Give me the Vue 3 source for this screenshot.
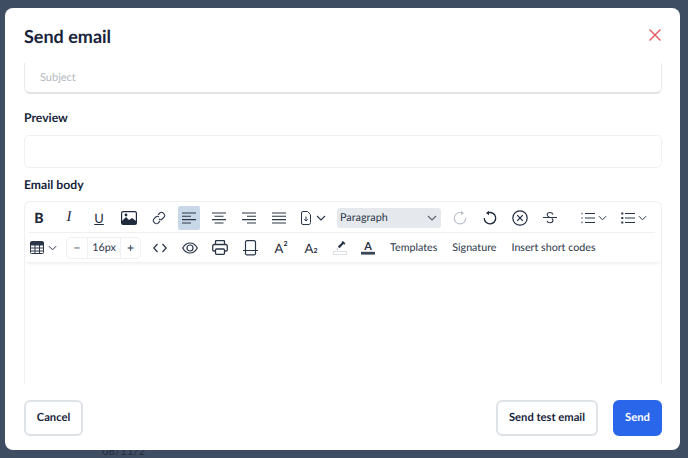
<script setup>
const row2Text = ['Templates', 'Signature', 'Insert short codes']
</script>

<template>
  <div class="page">
    <span class="behind">08/11/2</span>
    <div class="modal">
      <header class="head">
        <h1>Send email</h1>
        <svg class="close" width="12" height="12" viewBox="0 0 12 12"><path d="M.5.500l11 11M11.500.500l-11 11" stroke="#e5555c" stroke-width="1.400" fill="none"/></svg>
      </header>
      <div class="scroller">
        <div class="subject"><span>Subject</span></div>
        <div class="label l1">Preview</div>
        <div class="preview"></div>
        <div class="label l2">Email body</div>
        <div class="editor">
          <div class="toolbar">
            <div class="row r1">
              <span class="tb b1 txt bold">B</span>
              <span class="tb b2 txt ital">I</span>
              <span class="tb b3 txt und">U</span>
              <span class="tb b4"><svg width="16" height="14" viewBox="0 0 16 14"><rect x=".6" y=".6" width="14.8" height="12.8" rx="1.5" fill="#fff" stroke="#1f2a3c" stroke-width="1.2"/><path d="M1 13V10l4-4 3 3 3-2 4 3v3z" fill="#1f2a3c"/><circle cx="5" cy="4" r="1.4" fill="#1f2a3c"/></svg></span>
              <span class="tb b5"><svg width="14" height="14" viewBox="0 0 14 14" fill="none" stroke="#2b3648" stroke-width="1.1"><path d="M6 3.800l1.800-1.800a2.300 2.300 0 0 1 3.400 0l.8.8a2.300 2.300 0 0 1 0 3.400L10.200 8a2.300 2.300 0 0 1-3.200 0"/><path d="M8 10.200L6.200 12a2.300 2.300 0 0 1-3.400 0l-.8-.8a2.300 2.300 0 0 1 0-3.400L3.800 6A2.300 2.300 0 0 1 7 6"/></svg></span>
              <span class="tb b6 active"><svg width="14" height="12" viewBox="0 0 14 12" class="lines"><path d="M0 1h14M0 4.300h9M0 7.600h14M0 11h9"/></svg></span>
              <span class="tb b7"><svg width="14" height="12" viewBox="0 0 14 12" class="lines"><path d="M0 1h14M2.500 4.300h9M0 7.600h14M2.500 11h9"/></svg></span>
              <span class="tb b8"><svg width="14" height="12" viewBox="0 0 14 12" class="lines"><path d="M0 1h14M5 4.300h9M0 7.600h14M5 11h9"/></svg></span>
              <span class="tb b9"><svg width="14" height="12" viewBox="0 0 14 12" class="lines"><path d="M0 1h14M0 4.300h14M0 7.600h14M0 11h14"/></svg></span>
              <span class="tb b10">
                <svg width="12" height="14" viewBox="0 0 12 14" fill="none" stroke="#2b3648" stroke-width="1"><path d="M1.500 2a1.500 1.500 0 0 1 1.500-1.500h4.500l3 3v8a2 2 0 0 1-1.500 2H3a1.500 1.500 0 0 1-1.500-1.500zM6 5.500v4.500M4.200 8.300L6 10l1.800-1.700"/></svg>
                <svg class="chev" width="10" height="6" viewBox="0 0 10 6"><path d="M1 1l4 4 4-4"/></svg>
              </span>
              <div class="select"><span>Paragraph</span><svg class="chev muted" width="10" height="6" viewBox="0 0 10 6"><path d="M1 1l4 4 4-4"/></svg></div>
              <span class="tb b11"><svg width="14" height="15" viewBox="0 0 14 15" fill="none" stroke="#b9bfc8" stroke-width="1.100"><path d="M8.500 2.700A5.700 5.700 0 1 0 12.700 8"/><path d="M8 .8l3 2.200-3 2.200z" fill="#b9bfc8" stroke="none"/></svg></span>
              <span class="tb b12"><svg width="14" height="15" viewBox="0 0 14 15" fill="none" stroke="#1f2a3c" stroke-width="1.300"><path d="M5.500 2.700A5.700 5.700 0 1 1 1.300 8"/><path d="M6 .8L3 3l3 2.200z" fill="#1f2a3c" stroke="none"/></svg></span>
              <span class="tb b13"><svg width="16" height="16" viewBox="0 0 16 16" fill="none" stroke="#1f2a3c" stroke-width="1.200"><circle cx="8" cy="8" r="7.200"/><path d="M5.200 5.200l5.600 5.600M10.800 5.200l-5.600 5.600"/></svg></span>
              <span class="tb b14"><svg width="14" height="13" viewBox="0 0 14 13" fill="none" stroke="#2b3648" stroke-width="1.100"><path d="M0 6.500h14M10 3.500C9.500 2 8.500 1.500 7 1.500 5.300 1.500 4.200 2.300 4.200 3.500c0 1.200.8 2 2 2.500M8.800 7.500c.8.500 1.200 1 1.200 1.800C10 10.800 8.700 11.800 7 11.800c-1.500 0-2.700-.7-3-2"/></svg></span>
              <span class="tb b15">
                <svg width="14" height="12" viewBox="0 0 14 12" class="lines"><path d="M4 1.500h10M4 6h10M4 10.500h10"/><path d="M.5 1.500h1.500M.5 6h1.500M.5 10.500h1.500" stroke-width="1.600" stroke-dasharray="1 .6"/></svg>
                <svg class="chev" width="9" height="6" viewBox="0 0 10 6"><path d="M1 1l4 4 4-4"/></svg>
              </span>
              <span class="tb b16">
                <svg width="14" height="12" viewBox="0 0 14 12" class="lines"><path d="M4 1.500h10M4 6h10M4 10.500h10"/><path d="M.3 1.500h2M.3 6h2M.3 10.500h2" stroke-width="1.800"/></svg>
                <svg class="chev" width="9" height="6" viewBox="0 0 10 6"><path d="M1 1l4 4 4-4"/></svg>
              </span>
            </div>
            <div class="row r2">
              <span class="tb c1">
                <svg width="14" height="13" viewBox="0 0 14 13" fill="none" stroke="#2b3648" stroke-width="1"><rect x=".5" y=".5" width="13" height="12" rx="1"/><path d="M.5 1.500h13v2.500H.5z" fill="#2b3648"/><path d="M.5 7h13M.5 10h13M5 4v9M9.500 4v9"/></svg>
                <svg class="chev" width="9" height="6" viewBox="0 0 10 6"><path d="M1 1l4 4 4-4"/></svg>
              </span>
              <div class="stepper"><span class="st">−</span><span class="val">16px</span><span class="st plus">+</span></div>
              <span class="tb c2"><svg width="14" height="10" viewBox="0 0 14 10" fill="none" stroke="#2b3648" stroke-width="1.300"><path d="M4.500 1L.8 5l3.700 4M9.500 1l3.700 4-3.700 4"/></svg></span>
              <span class="tb c3"><svg width="16" height="12" viewBox="0 0 16 12" fill="none" stroke="#2b3648" stroke-width="1.200"><path d="M.7 6C2.500 2.700 5 1 8 1s5.500 1.700 7.300 5C13.500 9.300 11 11 8 11S2.500 9.300.7 6z"/><circle cx="8" cy="6" r="3"/></svg></span>
              <span class="tb c4"><svg width="16" height="15" viewBox="0 0 16 15" fill="none" stroke="#2b3648" stroke-width="1.300"><path d="M3.500 4.500V1.500a1 1 0 0 1 1-1h7a1 1 0 0 1 1 1v3M3.500 11H2a1.300 1.300 0 0 1-1.300-1.300V6A1.500 1.500 0 0 1 2.200 4.500h11.600A1.500 1.500 0 0 1 15.300 6v3.700A1.300 1.300 0 0 1 14 11h-1.500"/><rect x="3.500" y="9" width="9" height="5.300" rx="1"/></svg></span>
              <span class="tb c5"><svg width="15" height="16" viewBox="0 0 15 16" fill="none" stroke="#2b3648" stroke-width="1.200"><path d="M2.500 10V2a1.300 1.300 0 0 1 1.300-1.300h7.400A1.300 1.300 0 0 1 12.500 2v8M0 10.500h15M2.500 11v2.500a1.300 1.300 0 0 0 1.300 1.300h7.400a1.300 1.300 0 0 0 1.300-1.300V11"/></svg></span>
              <span class="tb c6 txt sup">A<sup>2</sup></span>
              <span class="tb c7 txt sup">A<sub>2</sub></span>
              <span class="tb c8"><svg width="14" height="15" viewBox="0 0 14 15"><path d="M10 1l2.500 2.500-1.300 1.200-.7-.7-4 4.200-1.700-1.700L9 2.600l-.6-.6z" fill="#2b3648"/><path d="M4.300 8.500l-.3 1 1-.3" stroke="#8a93a0" stroke-width=".6" fill="none"/><rect x=".5" y="11.500" width="13" height="3" fill="#fff" stroke="#dfe2e6"/></svg></span>
              <span class="tb c9"><svg width="14" height="15" viewBox="0 0 14 15"><text x="7" y="10" text-anchor="middle" class="atext">A</text><rect y="11.800" width="14" height="2.800" fill="#3b4557"/></svg></span>
              <span v-for="t in row2Text" :key="t" class="word">{{ t }}</span>
            </div>
          </div>
        </div>
      </div>
      <footer class="foot">
        <button class="btn cancel">Cancel</button>
        <div class="right">
          <button class="btn test">Send test email</button>
          <button class="btn send">Send</button>
        </div>
      </footer>
    </div>
  </div>
</template>

<style>
body { margin: 0; background: #3f4d62; }
</style>

<style scoped>
.page { width: 688px; height: 458px; box-sizing: border-box; padding: 8px 8px 8px 5px; background: #3f4d62; overflow: hidden; position: relative; font-family: Lato, sans-serif; color: #16233a; text-rendering: geometricPrecision; }
.behind { position: absolute; left: 102px; top: 445px; font-size: 11px; color: #232e3f; letter-spacing: .2px; }
.modal { position: relative; height: 442px; background: #fff; border-radius: 8px; display: flex; flex-direction: column; overflow: hidden; }
.head { height: 55px; flex: none; display: flex; align-items: center; justify-content: space-between; padding: 0 19px; box-sizing: border-box; }
h1 { margin: 0; font-size: 18px; font-weight: 700; color: #16233a; line-height: 1; }
.close { display: block; margin-bottom: 2px; }
.scroller { height: 321px; flex: none; overflow: hidden; padding: 0 18px 0 19px; }
.subject { height: 44px; margin-top: -13px; box-sizing: border-box; border: 1px solid #e8eaed; border-bottom: 2px solid #e2e3e6; border-radius: 6px; padding: 12px 15px 0; display: flex; align-items: center; font-size: 11px; color: #b4b9c1; }
.label { font-size: 12.2px; font-weight: 700; color: #16233a; line-height: 16px; }
.l1 { margin-top: 16px; }
.preview { height: 33px; margin-top: 9px; box-sizing: border-box; border: 1px solid #f0f1f3; border-radius: 5px; }
.l2 { margin-top: 9px; }
.editor { margin-top: 8px; height: 200px; box-sizing: border-box; border: 1px solid #eef0f2; border-bottom: 0; border-radius: 6px 6px 0 0; }
.toolbar { padding: 1px 6px 0 3px; height: 60px; box-sizing: border-box; box-shadow: 0 3px 3px -1px rgba(0,0,0,.06); border-radius: 6px 6px 4px 4px; }
.row { height: 27px; display: flex; align-items: center; }
.r1 { border-bottom: 1px solid #eff0f2; height: 29px; }
.r2 { height: 29px; }
.tb { display: inline-flex; align-items: center; justify-content: center; gap: 4px; flex: none; height: 24px; color: #1f2a3c; }
.tb svg { display: block; }
.txt { font-family: "Liberation Serif", serif; }
.bold { font-family: Lato, sans-serif; font-weight: 900; font-size: 14px; width: 22px; }
.ital { font-size: 15px; font-style: italic; width: 22px; margin-left: 8px; }
.und { font-family: Lato, sans-serif; font-size: 13px; text-decoration: underline; width: 22px; margin-left: 8px; }
.b4, .b5, .b6, .b7, .b8, .b9 { width: 22px; margin-left: 8px; }
.active { background: #c8d8e8; border-radius: 2px; }
.b10 { margin-left: 10px; }
.lines { fill: none; stroke: #2b3648; stroke-width: 1.100; }
.chev { fill: none; stroke: #2b3648; stroke-width: 1.100; }
.chev.muted { stroke: #56606f; }
.select { width: 104px; height: 20px; margin-left: 11px; background: #e5e9ed; border-radius: 3px; display: flex; align-items: center; justify-content: space-between; padding: 0 4px 0 3px; box-sizing: border-box; font-size: 10.8px; color: #2b3648; flex: none; }
.b11 { width: 14px; margin-left: 12px; }
.b12 { width: 14px; margin-left: 16px; }
.b13 { width: 16px; margin-left: 15px; }
.b14 { width: 14px; margin-left: 15px; }
.b15 { margin-left: 24px; gap: 3px; }
.b16 { margin-left: 14px; gap: 3px; }
.c1 { margin-left: 2px; }
.stepper { margin-left: 9px; width: 75px; height: 22px; flex: none; display: flex; border: 1px solid #eff0f2; border-radius: 5px; box-sizing: border-box; font-size: 10.8px; color: #2b3648; align-items: stretch; }
.st { width: 20px; display: flex; align-items: center; justify-content: center; font-size: 12px; }
.plus { width: 19px; }
.val { flex: 1; display: flex; align-items: center; justify-content: center; border: solid #eff0f2; border-width: 0 1px; }
.c2 { width: 14px; margin-left: 12px; }
.c3 { width: 16px; margin-left: 15px; }
.c4 { width: 16px; margin-left: 14px; }
.c5 { width: 15px; margin-left: 15px; }
.sup { font-family: Lato, sans-serif; font-size: 13px; margin-left: 16px; width: 14px; gap: 0; }
.sup sup, .sup sub { font-size: 7px; font-weight: 700; line-height: 0; }
.sup sup { position: relative; top: -4px; vertical-align: baseline; }
.sup sub { position: relative; top: 3px; vertical-align: baseline; }
.c7 { margin-left: 16px; }
.c8 { width: 14px; margin-left: 15px; }
.c9 { width: 14px; margin-left: 14px; }
.atext { font-family: Lato, sans-serif; font-weight: 700; font-size: 11px; fill: #2b3648; }
.word { font-size: 10.7px; color: #2b3648; white-space: nowrap; margin-left: 15px; }
.foot { height: 66px; flex: none; display: flex; justify-content: space-between; padding: 16px 18px 0 19px; align-items: flex-start; box-sizing: border-box; }
.right { display: flex; gap: 15px; }
.btn { height: 36px; box-sizing: border-box; border-radius: 6px; font-family: Lato, sans-serif; font-weight: 700; font-size: 11.2px; color: #16233a; background: #fff; border: 2px solid #dfe3e8; padding: 0 0 2px; text-rendering: geometricPrecision; }
.cancel { width: 59px; }
.test { width: 102px; }
.send { width: 49px; background: #2a66ea; border-color: #2a66ea; color: #fff; }
</style>
